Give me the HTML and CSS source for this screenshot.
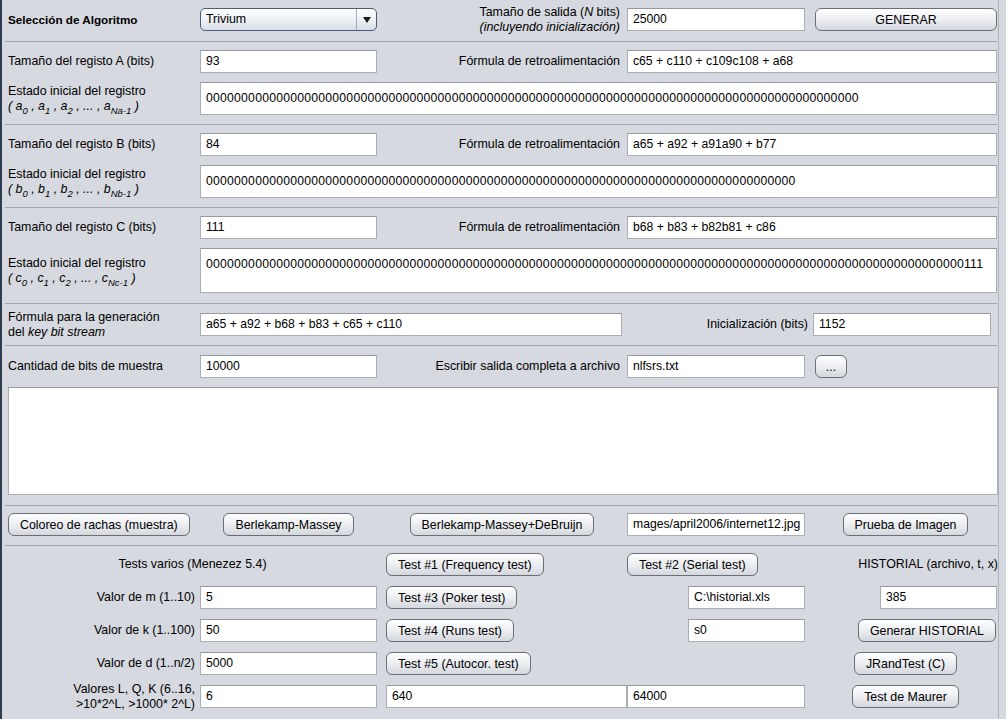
FILE: index.html
```html
<!DOCTYPE html>
<html lang="es">
<head>
<meta charset="utf-8">
<title>Trivium</title>
<link rel="stylesheet" href="styles.css">
</head>
<body>
<div class="app">
<div class="panel">

  <section class="sec s-top">
    <div class="row g5">
      <div class="lbl bold">Selección de Algoritmo</div>
      <div class="combo">
        <span class="combo-val">Trivium</span>
        <span class="combo-arrow"><svg width="8" height="6" viewBox="0 0 8 6"><path d="M0 0H8L4 6Z" fill="#1a1a1a"/></svg></span>
      </div>
      <div class="lbl r two"><span>Tamaño de salida (<i>N</i> bits)</span><i>(incluyendo inicialización)</i></div>
      <div class="field">25000</div>
      <button class="btn c5full">GENERAR</button>
    </div>
  </section>
  <div class="sep"></div>

  <section class="sec s-reg">
    <div class="row g5">
      <div class="lbl">Tamaño del registo A (bits)</div>
      <div class="field">93</div>
      <div class="lbl r">Fórmula de retroalimentación</div>
      <div class="field span45">c65 + c110 + c109c108 + a68</div>
    </div>
    <div class="row row-state g5">
      <div class="lbl two"><span>Estado inicial del registro</span><i class="vars">( a<sub>0</sub> , a<sub>1</sub> , a<sub>2</sub> , ... , a<sub>Na-1</sub> )</i></div>
      <div class="field state span25">000000000000000000000000000000000000000000000000000000000000000000000000000000000000000000000</div>
    </div>
  </section>
  <div class="sep"></div>

  <section class="sec s-reg">
    <div class="row g5">
      <div class="lbl">Tamaño del registo B (bits)</div>
      <div class="field">84</div>
      <div class="lbl r">Fórmula de retroalimentación</div>
      <div class="field span45">a65 + a92 + a91a90 + b77</div>
    </div>
    <div class="row row-state g5">
      <div class="lbl two"><span>Estado inicial del registro</span><i class="vars">( b<sub>0</sub> , b<sub>1</sub> , b<sub>2</sub> , ... , b<sub>Nb-1</sub> )</i></div>
      <div class="field state span25">000000000000000000000000000000000000000000000000000000000000000000000000000000000000</div>
    </div>
  </section>
  <div class="sep"></div>

  <section class="sec s-reg s-c">
    <div class="row g5">
      <div class="lbl">Tamaño del registo C (bits)</div>
      <div class="field">111</div>
      <div class="lbl r">Fórmula de retroalimentación</div>
      <div class="field span45">b68 + b83 + b82b81 + c86</div>
    </div>
    <div class="row row-state g5">
      <div class="lbl two"><span>Estado inicial del registro</span><i class="vars">( c<sub>0</sub> , c<sub>1</sub> , c<sub>2</sub> , ... , c<sub>Nc-1</sub> )</i></div>
      <div class="field state tall span25">000000000000000000000000000000000000000000000000000000000000000000000000000000000000000000000000000000000000111</div>
    </div>
  </section>
  <div class="sep"></div>

  <section class="sec s-formula">
    <div class="row g-formula">
      <div class="lbl two"><span>Fórmula para la generación</span><span>del <i>key bit stream</i></span></div>
      <div class="field">a65 + a92 + b68 + b83 + c65 + c110</div>
      <div class="lbl r">Inicialización (bits)</div>
      <div class="field">1152</div>
    </div>
  </section>
  <div class="sep"></div>

  <section class="sec s-out">
    <div class="row g5">
      <div class="lbl">Cantidad de bits de muestra</div>
      <div class="field">10000</div>
      <div class="lbl r">Escribir salida completa a archivo</div>
      <div class="field">nlfsrs.txt</div>
      <button class="btn dots">...</button>
    </div>
    <div class="textarea"></div>
  </section>
  <div class="sep"></div>

  <section class="sec s-btns">
    <div class="row g5">
      <button class="btn start">Coloreo de rachas (muestra)</button>
      <button class="btn center">Berlekamp-Massey</button>
      <button class="btn center">Berlekamp-Massey+DeBruijn</button>
      <div class="field">mages/april2006/internet12.jpg</div>
      <button class="btn center c5c">Prueba de Imagen</button>
    </div>
  </section>
  <div class="sep"></div>

  <section class="sec s-tests">
    <div class="row g5">
      <div class="lbl span12 mid">Tests varios (Menezez 5.4)</div>
      <button class="btn c3">Test #1 (Frequency test)</button>
      <button class="btn start">Test #2 (Serial test)</button>
      <div class="lbl hist">HISTORIAL (archivo, t, x)</div>
    </div>
    <div class="row g5">
      <div class="lbl rr">Valor de m (1..10)</div>
      <div class="field">5</div>
      <button class="btn c3">Test #3 (Poker test)</button>
      <div class="field small">C:\historial.xls</div>
      <div class="field small">385</div>
    </div>
    <div class="row g5">
      <div class="lbl rr">Valor de k (1..100)</div>
      <div class="field">50</div>
      <button class="btn c3">Test #4 (Runs test)</button>
      <div class="field small">s0</div>
      <button class="btn end">Generar HISTORIAL</button>
    </div>
    <div class="row g5">
      <div class="lbl rr">Valor de d (1..n/2)</div>
      <div class="field">5000</div>
      <button class="btn c3">Test #5 (Autocor. test)</button>
      <div></div>
      <button class="btn center c5c">JRandTest (C)</button>
    </div>
    <div class="row g5">
      <div class="lbl rr two"><span>Valores L, Q, K (6..16,</span><span>&gt;10*2^L, &gt;1000* 2^L)</span></div>
      <div class="field">6</div>
      <div class="field c3f">640</div>
      <div class="field">64000</div>
      <button class="btn center c5c">Test de Maurer</button>
    </div>
  </section>

</div>
</div>
</body>
</html>
```

FILE: styles.css
```css
* {
  box-sizing: border-box;
}

html,
body {
  margin: 0;
  padding: 0;
  overflow: hidden;
}

body {
  background: #d6d9df;
  font-family: "Liberation Sans", Arial, sans-serif;
  font-size: 12.4px;
  color: #000;
}

.app {
  width: 1006px;
  height: 719px;
  border-left: 2px solid #2e3c50;
  overflow: hidden;
}

.panel {
  width: 997px;
  height: 100%;
  border-right: 1px solid #aeb2b9;
}

.sec {
  display: flex;
  flex-direction: column;
  padding: 8px 0 9px 6px;
  gap: 9px;
}

.s-top {
  padding-top: 8px;
  padding-bottom: 10px;
}

.s-c {
  padding-bottom: 10px;
}

.s-formula {
  padding-top: 9px;
  padding-bottom: 9px;
}

.s-out {
  padding-top: 9px;
  padding-bottom: 10px;
}

.s-btns {
  padding-top: 7px;
  padding-bottom: 9px;
}

.s-tests {
  padding-top: 7px;
  gap: 10px;
}

.sep {
  height: 1px;
  background: #a2a6ad;
  margin: 0 1px 0 3px;
}

.row {
  display: grid;
  grid-auto-rows: 23px;
  align-items: center;
}

.row.row-state {
  grid-auto-rows: auto;
}

.g5 {
  grid-template-columns: 192px 177px 250px 178px 192px;
}

.g-formula {
  grid-template-columns: 192px 422px 191px 178px 6px;
}

.lbl {
  white-space: nowrap;
  line-height: 15px;
}

.bold {
  font-weight: bold;
  font-size: 11.7px;
}

.r {
  text-align: right;
  padding-right: 7px;
}

.g-formula .r {
  padding-right: 5px;
}

.rr {
  text-align: right;
  padding-right: 5px;
}

.two {
  display: flex;
  flex-direction: column;
}

.r.two,
.rr.two {
  align-items: flex-end;
}

.vars sub {
  font-size: 9.5px;
  line-height: 0;
  vertical-align: -4px;
}

.field {
  height: 23px;
  background: #fff;
  border: 1px solid #a9adb4;
  border-top-color: #959aa2;
  padding: 0 5px;
  font-size: 12.2px;
  line-height: 21px;
  white-space: nowrap;
  overflow: hidden;
}

.state {
  height: 33px;
  padding-top: 8px;
  line-height: 14px;
  letter-spacing: 0.24px;
}

.state.tall {
  height: 45px;
}

.span45 {
  grid-column: 4 / 6;
}

.span25 {
  grid-column: 2 / 6;
}

.span12 {
  grid-column: 1 / 3;
}

.mid {
  text-align: center;
}

.textarea {
  height: 108px;
  background: #fff;
  border: 1px solid #a9adb4;
  border-top-color: #959aa2;
}

.combo {
  display: flex;
  height: 23px;
  border: 1px solid #4b5d7a;
  border-radius: 5px;
  background: linear-gradient(#fdfeff, #eef1f5 50%, #d9dee6);
}

.combo-val {
  flex: 1;
  padding-left: 5px;
  line-height: 21px;
}

.combo-arrow {
  width: 20px;
  border-left: 1px solid #a3abb8;
  display: flex;
  align-items: center;
  justify-content: center;
}

.btn {
  height: 23px;
  border: 1px solid #6a6f77;
  border-radius: 6px;
  background: linear-gradient(#fefefe, #eef0f3 45%, #d4d7dd);
  font: inherit;
  color: #000;
  padding: 0 11px;
  white-space: nowrap;
  cursor: default;
}

.c5full {
  margin-left: 10px;
}

.dots {
  justify-self: start;
  margin-left: 10px;
  width: 32px;
  padding: 0;
}

.start {
  justify-self: start;
}

.center {
  justify-self: center;
}

.end {
  justify-self: end;
  margin-right: 1px;
}

.c5c {
  margin-left: 9px;
}

.c3 {
  justify-self: start;
  margin-left: 9px;
}

.c3f {
  margin-left: 9px;
}

.small {
  justify-self: end;
  width: 117px;
}

.hist {
  text-align: right;
  margin-right: -1px;
}
```
